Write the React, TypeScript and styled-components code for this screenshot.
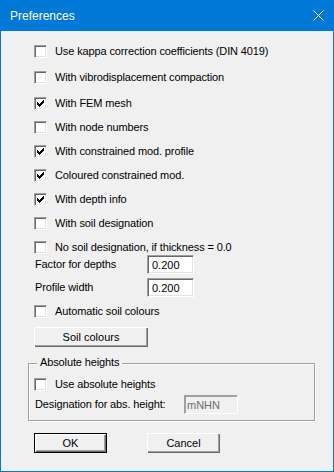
import React from 'react';
import styled, { createGlobalStyle } from 'styled-components';

const GlobalStyle = createGlobalStyle`
  html, body {
    margin: 0;
    padding: 0;
    background: #f0f0f0;
  }
  body {
    font-family: "Liberation Sans", Arial, sans-serif;
    font-size: 11px;
    letter-spacing: -0.12px;
    color: #000;
  }
`;

const Window = styled.div`
  width: 334px;
  height: 472px;
  box-sizing: border-box;
  border: 1px solid #0078d7;
  border-top: 0;
  background: #f0f0f0;
  display: flex;
  flex-direction: column;
`;

const TitleBar = styled.div`
  height: 31px;
  margin: 0 -1px;
  background: #0078d7;
  color: #fff;
  display: flex;
  align-items: center;
  justify-content: space-between;
  padding: 0 10px 0 10px;
  font-size: 12px;
  letter-spacing: 0;
`;

const CloseIcon = styled.svg`
  width: 11px;
  height: 11px;
`;

const Body = styled.div`
  padding: 14px 0 0 33px;
  display: flex;
  flex-direction: column;
`;

const Row = styled.div<{ $mt?: number; $h?: number }>`
  display: flex;
  align-items: center;
  height: ${(p) => p.$h ?? 13}px;
  margin-top: ${(p) => p.$mt ?? 0}px;
  line-height: 13px;
  white-space: nowrap;
`;

const Box = styled.span`
  width: 13px;
  height: 13px;
  box-sizing: border-box;
  flex: none;
  background: #fff;
  border-top: 1px solid #a0a0a0;
  border-left: 1px solid #a0a0a0;
  border-right: 1px solid #fff;
  border-bottom: 1px solid #fff;
  box-shadow: inset 1px 1px 0 #696969, inset -1px -1px 0 #e3e3e3;
  display: flex;
  align-items: center;
  justify-content: center;
`;

const CheckText = styled.span`
  margin-left: 8px;
`;

const Label = styled.span<{ $w: number }>`
  width: ${(p) => p.$w}px;
  padding-left: 1px;
  box-sizing: border-box;
  flex: none;
`;

const Field = styled.input<{ $w: number }>`
  width: ${(p) => p.$w}px;
  height: 19px;
  box-sizing: border-box;
  margin: 0;
  padding: 0 0 0 ${(p) => (p.disabled ? 2 : 4)}px;
  font: inherit;
  color: ${(p) => (p.disabled ? '#6d6d6d' : '#000')};
  background: ${(p) => (p.disabled ? '#f0f0f0' : '#fff')};
  border-top: 1px solid #a0a0a0;
  border-left: 1px solid #a0a0a0;
  border-right: 1px solid #fff;
  border-bottom: 1px solid #fff;
  box-shadow: ${(p) =>
    p.disabled
      ? 'inset 1px 1px 0 #a0a0a0'
      : 'inset 1px 1px 0 #696969, inset -1px -1px 0 #e3e3e3'};
  outline: none;
`;

const Button = styled.button<{ $w: number; $default?: boolean }>`
  width: ${(p) => p.$w}px;
  height: 20px;
  box-sizing: border-box;
  margin: 0;
  padding: 0;
  font: inherit;
  color: #000;
  background: #f0f0f0;
  border: ${(p) => (p.$default ? '1px solid #000' : '0')};
  box-shadow: inset 1px 1px 0 #fff, inset -1px -1px 0 #696969, inset -2px -2px 0 #a0a0a0;
  cursor: default;
`;

const Group = styled.div`
  position: relative;
  margin: 16px 0 0 -6px;
  width: 287px;
  box-sizing: border-box;
  border: 1px solid #a0a0a0;
  box-shadow: 1px 1px 0 #fff, inset 1px 1px 0 #fff;
  padding: 14px 0 6px 5px;
  display: flex;
  flex-direction: column;
`;

const GroupTitle = styled.span`
  position: absolute;
  top: -8px;
  left: 8px;
  padding: 0 3px;
  line-height: 13px;
  background: #f0f0f0;
`;

const ButtonBar = styled.div`
  display: flex;
  gap: 40px;
  margin-top: 12px;
`;

const Tick = () => (
  <svg width="7" height="7" viewBox="0 0 7 7" shapeRendering="crispEdges">
    <path
      fill="#000"
      d="M6 0h1v3h-1zM5 1h1v3h-1zM4 2h1v3h-1zM3 3h1v3h-1zM2 4h1v3h-1zM1 3h1v3h-1zM0 2h1v3h-1z"
    />
  </svg>
);

const Check = ({ label, checked, mt }: { label: string; checked?: boolean; mt?: number }) => (
  <Row $mt={mt}>
    <Box>{checked && <Tick />}</Box>
    <CheckText>{label}</CheckText>
  </Row>
);

const options: [string, boolean, number][] = [
  ['Use kappa correction coefficients (DIN 4019)', false, 0],
  ['With vibrodisplacement compaction', false, 13],
  ['With FEM mesh', true, 13],
  ['With node numbers', false, 11],
  ['With constrained mod. profile', true, 11],
  ['Coloured constrained mod.', true, 11],
  ['With depth info', true, 11],
  ['With soil designation', false, 11],
  ['No soil designation, if thickness = 0.0', false, 11],
];

const App = () => (
  <>
    <GlobalStyle />
    <Window>
      <TitleBar>
        <span>Preferences</span>
        <CloseIcon viewBox="0 0 11 11">
          <path d="M0.5 0.5L10.5 10.5M10.5 0.5L0.5 10.5" stroke="#fff" strokeWidth="1" />
        </CloseIcon>
      </TitleBar>
      <Body>
        {options.map(([label, checked, mt]) => (
          <Check key={label} label={label} checked={checked} mt={mt} />
        ))}
        <Row $h={19} $mt={1}>
          <Label $w={113}>Factor for depths</Label>
          <Field $w={47} value="0.200" readOnly />
        </Row>
        <Row $h={19} $mt={4}>
          <Label $w={113}>Profile width</Label>
          <Field $w={47} value="0.200" readOnly />
        </Row>
        <Check label="Automatic soil colours" mt={8} />
        <Row $h={20} $mt={9}>
          <Button $w={114}>Soil colours</Button>
        </Row>
        <Group>
          <GroupTitle>Absolute heights</GroupTitle>
          <Check label="Use absolute heights" />
          <Row $h={19} $mt={4}>
            <Label $w={150}>Designation for abs. height:</Label>
            <Field $w={54} value="mNHN" disabled readOnly />
          </Row>
        </Group>
        <ButtonBar>
          <Button $w={73} $default>OK</Button>
          <Button $w={73}>Cancel</Button>
        </ButtonBar>
      </Body>
    </Window>
  </>
);

export default App;
